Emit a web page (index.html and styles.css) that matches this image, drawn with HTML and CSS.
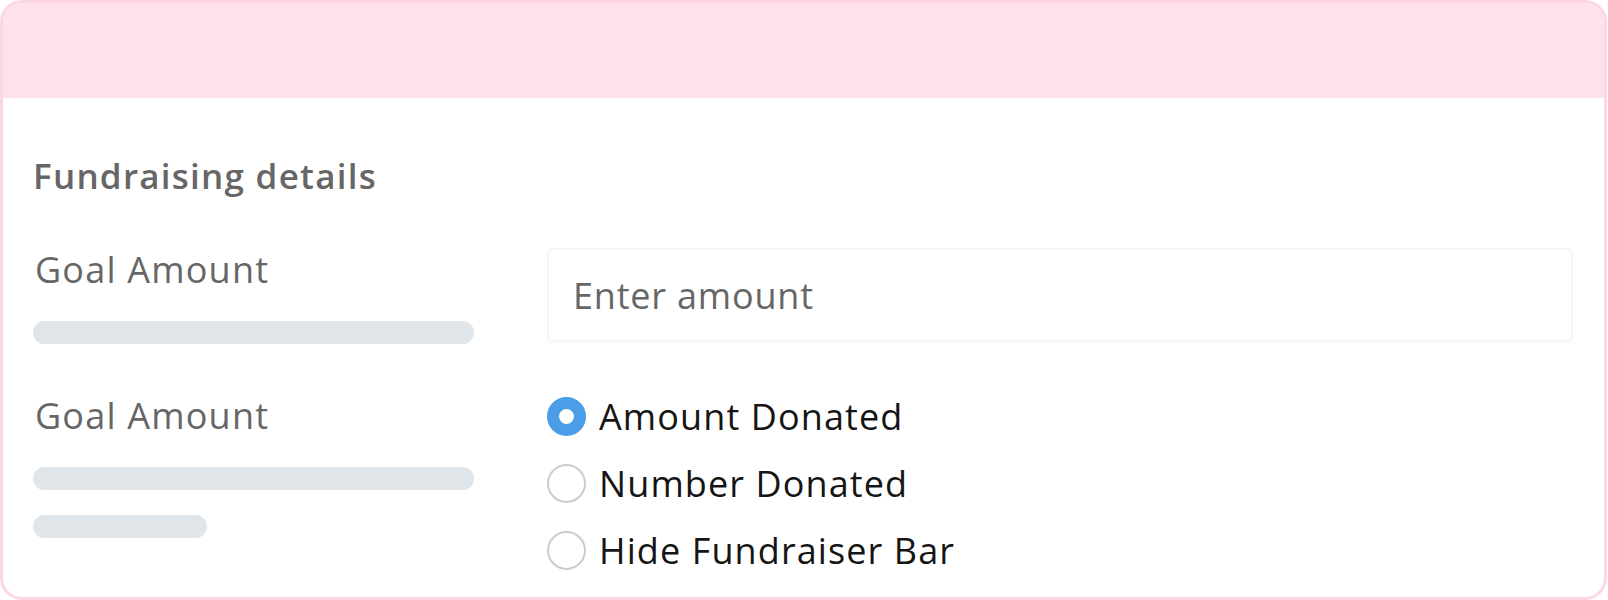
FILE: index.html
```html
<!DOCTYPE html>
<html lang="en">
<head>
  <meta charset="UTF-8" />
  <meta name="viewport" content="width=device-width, initial-scale=1.0" />
  <title>Fundraising details</title>
  <link rel="stylesheet" href="styles.css">
</head>
<body>
  <div class="card">
    <div class="card-header"></div>
    <div class="card-body">
      <h2 class="title">Fundraising details</h2>

      <div class="row">
        <div class="label-col">
          <div class="label">Goal Amount</div>
          <div class="bar"></div>
        </div>
        <div class="field-col">
          <input class="amount" type="text" placeholder="Enter amount">
        </div>
      </div>

      <div class="row second">
        <div class="label-col">
          <div class="label">Goal Amount</div>
          <div class="bar"></div>
          <div class="bar short"></div>
        </div>
        <div class="field-col">
          <div class="options">
            <label class="option"><span class="radio checked"></span>Amount Donated</label>
            <label class="option"><span class="radio"></span>Number Donated</label>
            <label class="option"><span class="radio"></span>Hide Fundraiser Bar</label>
          </div>
        </div>
      </div>
    </div>
  </div>
</body>
</html>
```

FILE: styles.css
```css
body {
  margin: 0;
  padding: 0;
  background: #ffffff;
  font-family: "Open Sans", Arial, sans-serif;
}
.card {
  width: 1607px;
  height: 600px;
  box-sizing: border-box;
  border: 3px solid #fcd6e3;
  border-radius: 22px;
  overflow: hidden;
  background: #ffffff;
}
.card-header {
  height: 95px;
  background: #ffe1ea;
}
.card-body {
  padding: 58px 31px 0 30px;
}
.title {
  margin: 0;
  font-size: 35px;
  line-height: 40px;
  font-weight: 600;
  letter-spacing: 1.25px;
  color: #666666;
}
.row {
  display: flex;
  gap: 73px;
  margin-top: 52px;
}
.row.second {
  margin-top: 50px;
}
.label-col {
  width: 441px;
  flex: none;
}
.label {
  font-size: 36px;
  line-height: 44px;
  letter-spacing: 1.2px;
  color: #666666;
  padding-left: 2px;
}
.bar {
  height: 23px;
  border-radius: 12px;
  background: #dfe5e9;
  margin-top: 29px;
}
.bar + .bar {
  margin-top: 25px;
}
.bar.short {
  width: 174px;
}
.field-col {
  flex: 1;
}
.amount {
  display: block;
  width: 100%;
  height: 94px;
  box-sizing: border-box;
  border: 2px solid #f6f6f6;
  border-radius: 5px;
  box-shadow: 0 1px 3px rgba(0, 0, 0, 0.03);
  padding: 0 24px;
  font-family: inherit;
  font-size: 36px;
  letter-spacing: 0.8px;
  color: #666666;
  background: #ffffff;
  outline: none;
}
.amount::placeholder {
  color: #666666;
}
.options {
  display: flex;
  flex-direction: column;
  gap: 23px;
}
.option {
  display: flex;
  align-items: center;
  gap: 13px;
  height: 44px;
  font-size: 36px;
  letter-spacing: 1.1px;
  color: #151515;
}
.radio {
  width: 39px;
  height: 39px;
  box-sizing: border-box;
  border-radius: 50%;
  border: 2px solid #cccccc;
  flex: none;
}
.radio.checked {
  border: 12px solid #4a9de6;
  background: #ffffff;
}
```
